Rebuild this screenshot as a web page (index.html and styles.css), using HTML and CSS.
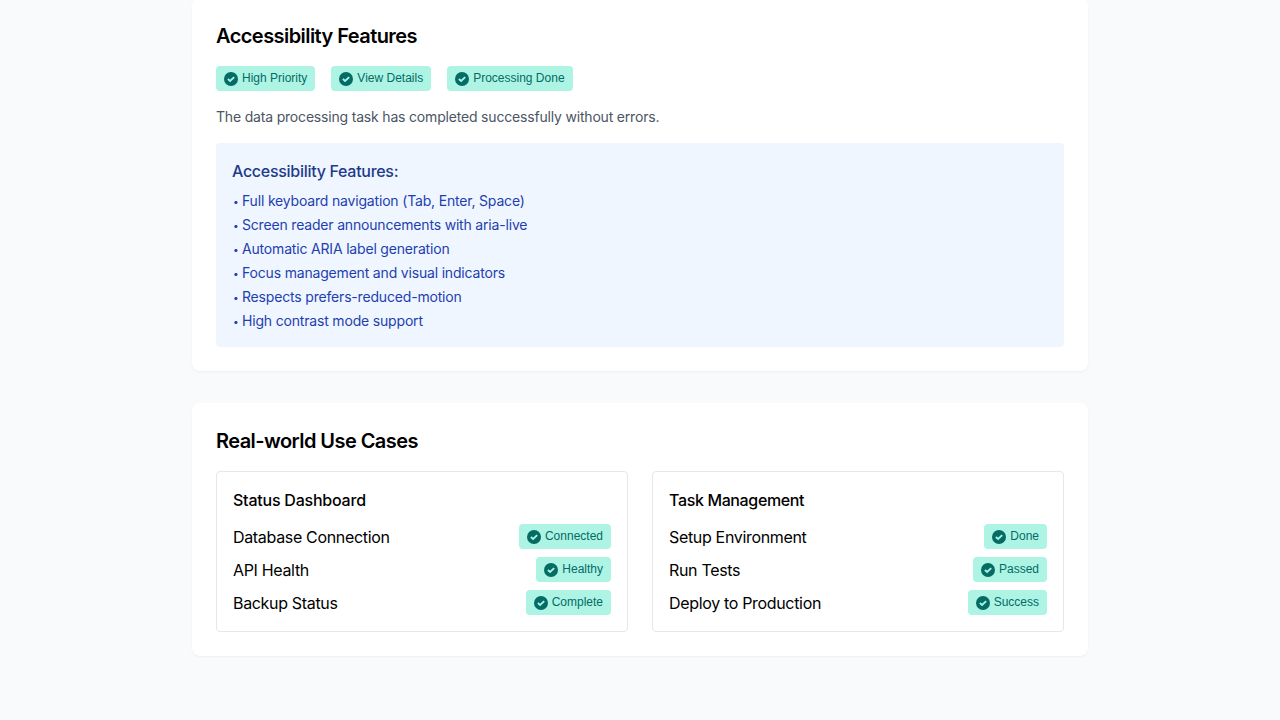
FILE: index.html
```html
<!DOCTYPE html>
<html lang="en">
<head>
<meta charset="utf-8">
<title>Accessibility Features</title>
<link rel="stylesheet" href="styles.css">
</head>
<body>
<svg width="0" height="0" class="defs"><symbol id="check" viewBox="0 0 14 14"><circle cx="7" cy="7" r="7" fill="#046b65"/><path d="M3.9 7 6.1 8.9 10.2 5.1" fill="none" stroke="#adf4e4" stroke-width="1.9"/></symbol></svg>
<main class="page">
  <section class="card">
    <h2 class="title">Accessibility Features</h2>
    <div class="badges">
      <span class="badge"><svg class="icon"><use href="#check"/></svg><span class="label">High Priority</span></span>
      <span class="badge"><svg class="icon"><use href="#check"/></svg><span class="label">View Details</span></span>
      <span class="badge"><svg class="icon"><use href="#check"/></svg><span class="label">Processing Done</span></span>
    </div>
    <p class="note">The data processing task has completed successfully without errors.</p>
    <div class="info">
      <h3 class="subtitle">Accessibility Features:</h3>
      <ul class="list">
        <li><span class="dot">•</span>Full keyboard navigation (Tab, Enter, Space)</li>
        <li><span class="dot">•</span>Screen reader announcements with aria-live</li>
        <li><span class="dot">•</span>Automatic ARIA label generation</li>
        <li><span class="dot">•</span>Focus management and visual indicators</li>
        <li><span class="dot">•</span>Respects prefers-reduced-motion</li>
        <li><span class="dot">•</span>High contrast mode support</li>
      </ul>
    </div>
  </section>
  <section class="card">
    <h2 class="title">Real-world Use Cases</h2>
    <div class="grid">
      <div class="panel">
        <h3 class="panel-title status">Status Dashboard</h3>
        <div class="rows">
          <div class="row"><span>Database Connection</span><span class="badge"><svg class="icon"><use href="#check"/></svg><span class="label">Connected</span></span></div>
          <div class="row"><span>API Health</span><span class="badge"><svg class="icon"><use href="#check"/></svg><span class="label">Healthy</span></span></div>
          <div class="row"><span>Backup Status</span><span class="badge"><svg class="icon"><use href="#check"/></svg><span class="label">Complete</span></span></div>
        </div>
      </div>
      <div class="panel">
        <h3 class="panel-title">Task Management</h3>
        <div class="rows">
          <div class="row"><span>Setup Environment</span><span class="badge"><svg class="icon"><use href="#check"/></svg><span class="label">Done</span></span></div>
          <div class="row"><span>Run Tests</span><span class="badge"><svg class="icon"><use href="#check"/></svg><span class="label">Passed</span></span></div>
          <div class="row"><span>Deploy to Production</span><span class="badge"><svg class="icon"><use href="#check"/></svg><span class="label">Success</span></span></div>
        </div>
      </div>
    </div>
  </section>
</main>
</body>
</html>
```
FILE: styles.css
```css
* { box-sizing: border-box; margin: 0; padding: 0; }
html { height: 720px; overflow: hidden; }
body { height: 720px; overflow: hidden; background: #f9fafb; color: #000; font: 16px/24px Inter, sans-serif; }
.defs { display: block; }
.page { width: 896px; margin: -2px auto 0; display: flex; flex-direction: column; gap: 32px; }
.card { background: #fff; border-radius: 8px; padding: 24px; box-shadow: 0 1px 2px rgba(0,0,0,.05); }
.title { font-size: 20px; line-height: 28px; font-weight: 600; margin-bottom: 16px; letter-spacing: -.56px; }
.badges { display: flex; gap: 16px; }
.badge { display: flex; align-items: center; gap: 4px; height: 25px; padding: 0 8px; border-radius: 4px; background: #adf4e4; color: #046b65; font: 12px/22px "Liberation Sans", sans-serif; letter-spacing: 0; white-space: nowrap; }
.icon { width: 14px; height: 14px; margin-top: 1px; flex: none; }
.label { padding-bottom: 2px; }
.note { font-size: 14px; line-height: 20px; margin: 16px 0; color: #4b5563; letter-spacing: -.185px; }
.info { background: #eff6ff; border-radius: 4px; padding: 16px; }
.subtitle { font-size: 16px; line-height: 24px; font-weight: 500; color: #1e3a8a; margin-bottom: 8px; letter-spacing: -.29px; }
.list { list-style: none; display: flex; flex-direction: column; gap: 4px; font-size: 14px; line-height: 20px; color: #1e40af; letter-spacing: -.18px; }
.list li { display: flex; }
.dot { width: 10px; font-size: 10px; text-indent: 1px; }
.grid { display: grid; grid-template-columns: 1fr 1fr; gap: 24px; }
.panel { border: 1px solid #e5e7eb; border-radius: 4px; padding: 16px; }
.panel-title { font-size: 16px; line-height: 24px; font-weight: 500; margin-bottom: 12px; letter-spacing: -.36px; }
.status { letter-spacing: -.22px; }
.rows { display: flex; flex-direction: column; gap: 8px; }
.row { display: flex; justify-content: space-between; align-items: center; height: 25px; letter-spacing: -.33px; }
```
